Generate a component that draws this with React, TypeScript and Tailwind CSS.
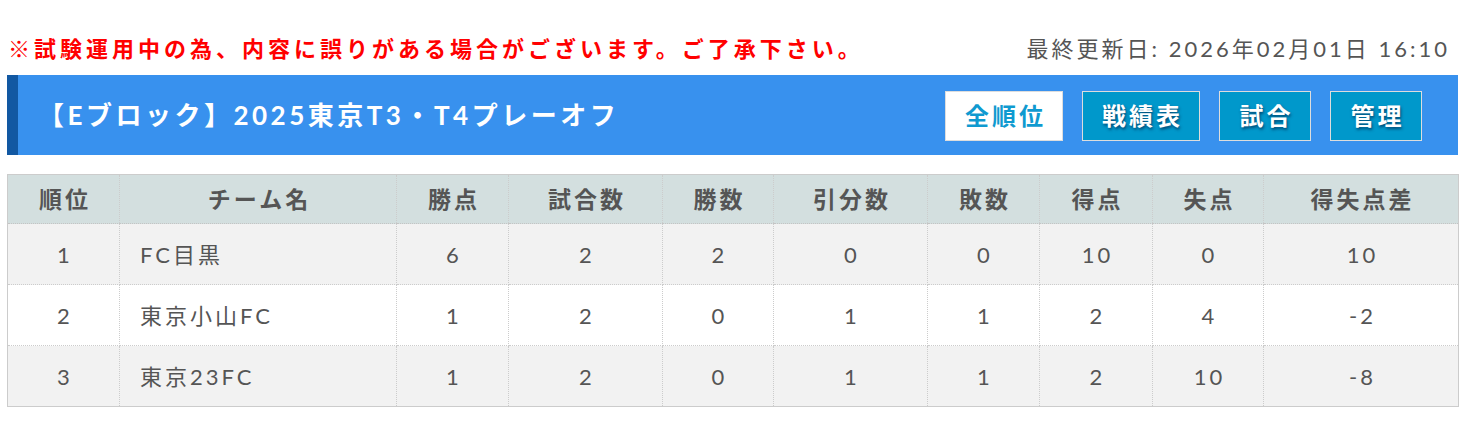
import React from "react";

const FONT = "font-['Lato','Noto_Sans_CJK_JP',sans-serif]";

const headers = ["順位", "チーム名", "勝点", "試合数", "勝数", "引分数", "敗数", "得点", "失点", "得失点差"];
const widths = ["w-[112px]", "w-[277px]", "w-[112px]", "w-[154px]", "w-[111px]", "w-[154px]", "w-[112px]", "w-[113px]", "w-[111px]", "w-[195px]"];

const rows: (string | number)[][] = [
  [1, "FC目黒", 6, 2, 2, 0, 0, 10, 0, 10],
  [2, "東京小山FC", 1, 2, 0, 1, 1, 2, 4, -2],
  [3, "東京23FC", 1, 2, 0, 1, 1, 2, 10, -8],
];

export default function App() {
  return (
    <div className={`${FONT} bg-white w-[1466px] h-[423px] overflow-hidden`}>
      <div className="ml-[7px] mr-[8px]">
        <div className="flex items-center justify-between h-[30px] mt-[34px] mb-[11px]">
          <div className="text-[22px] font-bold text-[#ff0000] leading-[30px] ml-[1px] tracking-[4px] whitespace-nowrap">
            ※試験運用中の為、内容に誤りがある場合がございます。ご了承下さい。
          </div>
          <div className="text-[22px] text-[#555555] leading-[30px] mr-[8px] tracking-[3px] whitespace-nowrap">
            最終更新日: 2026年02月01日 16:10
          </div>
        </div>

        <div className="flex items-center justify-between h-[80px] bg-[#3891ee] border-l-[11px] border-[#1258a2] pl-[20px] pr-[36px]">
          <h1 className="text-[26px] font-bold text-white tracking-[3.5px] whitespace-nowrap">
            【Eブロック】2025東京T3・T4プレーオフ
          </h1>
          <div className="flex gap-[19px] mt-[2px]">
            <div className="h-[50px] w-[118px] flex items-center justify-center bg-white border border-[#dddddd] text-[#0f9ad0] text-[24px] font-bold tracking-[3px] pl-[3px]">
              全順位
            </div>
            {["戦績表", "試合", "管理"].map((t) => (
              <div
                key={t}
                className={`h-[50px] ${t.length === 3 ? "w-[118px]" : "w-[92px]"} flex items-center justify-center bg-[#0098cb] border border-[#dddddd] text-white text-[24px] font-bold tracking-[3px] pl-[3px] [text-shadow:1px_2px_3px_rgba(0,40,80,0.7)]`}
              >
                {t}
              </div>
            ))}
          </div>
        </div>

        <table className="mt-[19px] w-[1451px] table-fixed border-collapse border border-solid border-[#cccccc] text-[#555555] text-[22px]">
          <thead>
            <tr className="bg-[#d3dfdf]">
              {headers.map((h, i) => (
                <th
                  key={h}
                  className={`${widths[i]} h-[49px] text-[23px] font-bold text-center border-l border-dotted border-[#cccccc] border-b border-b-solid border-b-[#c4c4c4] tracking-[3px] pl-[3px]`}
                >
                  {h}
                </th>
              ))}
            </tr>
          </thead>
          <tbody>
            {rows.map((r, ri) => (
              <tr key={ri} className={ri % 2 === 0 ? "bg-[#f2f2f2]" : "bg-white"}>
                {r.map((c, ci) => (
                  <td
                    key={ci}
                    className={`h-[61px] border border-dotted border-[#cccccc] tracking-[3px] ${ci === 1 ? "text-left pl-[20px]" : "text-center pl-[3px]"}`}
                  >
                    {c}
                  </td>
                ))}
              </tr>
            ))}
          </tbody>
        </table>
      </div>
    </div>
  );
}
